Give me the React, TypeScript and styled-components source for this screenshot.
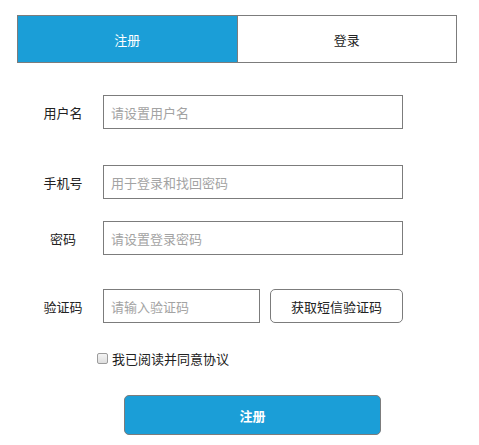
import { FC, useState } from "react";
import styled, { createGlobalStyle } from "styled-components";

const GlobalStyle = createGlobalStyle`
  body {
    margin: 0;
    background: #fff;
    font-family: "Noto Sans CJK SC", "Liberation Sans", sans-serif;
    color: #222;
  }
`;

const Page = styled.div`
  width: 479px;
  padding-top: 15px;
`;

const Tabs = styled.div`
  display: flex;
  width: 438px;
  height: 46px;
  margin-left: 17px;
  border: 1px solid #7c7c7c;
`;

const Tab = styled.div<{ $active?: boolean }>`
  flex: 1;
  display: flex;
  align-items: center;
  justify-content: center;
  font-size: 13px;
  background: ${(p) => (p.$active ? "#1b9ed7" : "#fff")};
  color: ${(p) => (p.$active ? "#fff" : "#222")};
  & + & {
    border-left: 1px solid #7c7c7c;
  }
`;

const Form = styled.div`
  display: flex;
  flex-direction: column;
  padding-left: 23px;
`;

const Row = styled.div<{ $top: number }>`
  display: flex;
  align-items: center;
  margin-top: ${(p) => p.$top}px;
`;

const Label = styled.div`
  width: 80px;
  text-align: center;
  font-size: 13px;
  color: #222;
`;

const Input = styled.input<{ $width?: number }>`
  box-sizing: border-box;
  width: ${(p) => p.$width ?? 300}px;
  height: 34px;
  padding: 0 7px;
  border: 1px solid #7c7c7c;
  border-radius: 0;
  outline: none;
  font-family: inherit;
  font-size: 13px;
  color: #222;
  &::placeholder {
    color: #a3a3a3;
  }
`;

const CodeButton = styled.button`
  box-sizing: border-box;
  width: 133px;
  height: 34px;
  margin-left: 10px;
  border: 1px solid #7c7c7c;
  border-radius: 5px;
  background: #fff;
  font-family: inherit;
  font-size: 13px;
  color: #222;
  cursor: pointer;
`;

const AgreeRow = styled.label`
  display: flex;
  align-items: center;
  height: 18px;
  margin-top: 26px;
  margin-left: 97px;
  font-size: 13px;
  color: #222;
  cursor: pointer;
`;

const Box = styled.span<{ $checked: boolean }>`
  box-sizing: border-box;
  width: 11px;
  height: 11px;
  margin-right: 4px;
  border: 1px solid #9c9c9c;
  border-radius: 2px;
  background: ${(p) =>
    p.$checked ? "#1b9ed7" : "linear-gradient(#f4f4f4, #dedede)"};
`;

const Submit = styled.button`
  box-sizing: border-box;
  width: 257px;
  height: 40px;
  margin: 28px 0 0 124px;
  border: 1px solid #7c7c7c;
  border-radius: 5px;
  background: #1b9ed7;
  color: #fff;
  font-family: inherit;
  font-size: 13px;
  font-weight: bold;
  cursor: pointer;
`;

const App: FC = () => {
  const [agreed, setAgreed] = useState(false);

  return (
    <>
      <GlobalStyle />
      <Page>
        <Tabs>
          <Tab $active>注册</Tab>
          <Tab>登录</Tab>
        </Tabs>

        <Form>
          <Row $top={32}>
            <Label>用户名</Label>
            <Input placeholder="请设置用户名" />
          </Row>
          <Row $top={36}>
            <Label>手机号</Label>
            <Input placeholder="用于登录和找回密码" />
          </Row>
          <Row $top={22}>
            <Label>密码</Label>
            <Input type="password" placeholder="请设置登录密码" />
          </Row>
          <Row $top={34}>
            <Label>验证码</Label>
            <Input $width={157} placeholder="请输入验证码" />
            <CodeButton>获取短信验证码</CodeButton>
          </Row>
        </Form>

        <AgreeRow onClick={() => setAgreed(!agreed)}>
          <Box $checked={agreed} />
          我已阅读并同意协议
        </AgreeRow>

        <Submit>注册</Submit>
      </Page>
    </>
  );
};

export default App;
